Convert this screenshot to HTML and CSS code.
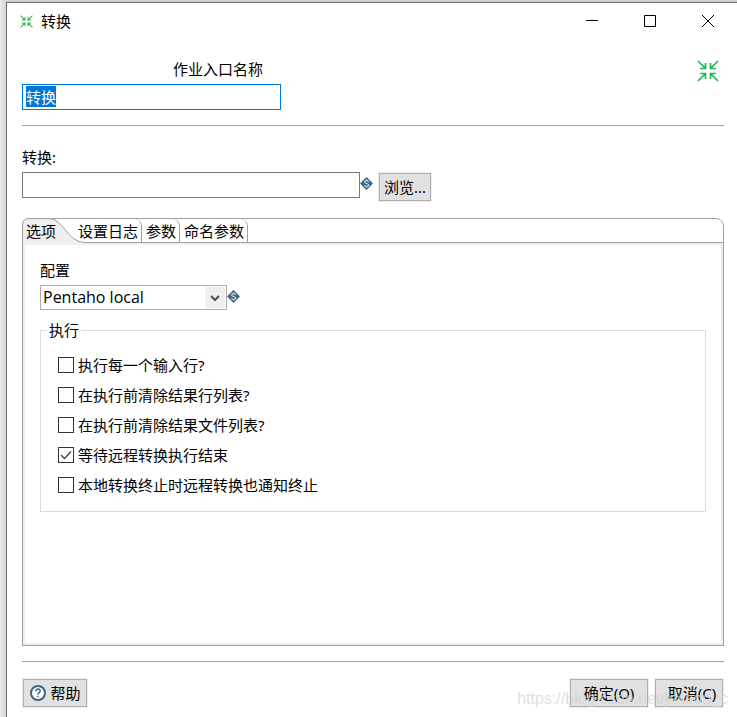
FILE: index.html
```
<!DOCTYPE html>
<html lang="zh-CN">
<head>
<meta charset="utf-8">
<meta name="viewport" content="width=device-width, initial-scale=1">
<title>转换</title>
<link rel="stylesheet" href="styles.css">
</head>
<body>
<svg class="defs" aria-hidden="true">
  <symbol id="shrink" viewBox="0 0 22 22">
    <path d="M1 1l7.500 7.500M3 8.500h5.500V3M21 1l-7.500 7.500M19 8.500h-5.500V3M1 21l7.500-7.500M3 13.500h5.500V19M21 21l-7.500-7.500M19 13.500h-5.500V19" fill="none" stroke="#27b557" stroke-width="1.700"/>
  </symbol>
  <symbol id="variable" viewBox="0 0 13 13">
    <path d="M6.500 0.300L12.700 6.500 6.500 12.700 0.300 6.500z" fill="#3d6480" stroke="#3d6480" stroke-width=".6" stroke-linejoin="round"/>
    <path d="M8.600 4.900C8.300 3.200 4.700 3.200 4.700 5c0 1.800 4 1.200 4 3 0 1.900-3.900 1.800-4.200 0M6.600 2.600v1.200M6.600 9.300v1.200" fill="none" stroke="#d5e0e8" stroke-width="1.200"/>
  </symbol>
</svg>
<div class="window">
  <header class="titlebar">
    <svg class="app-icon"><use href="#shrink"/></svg>
    <h1 class="title">转换</h1>
    <div class="window-controls">
      <button class="control" type="button" aria-label="最小化"><svg class="glyph" viewBox="0 0 14 14"><path d="M1 6.500h12"/></svg></button>
      <button class="control" type="button" aria-label="最大化"><svg class="glyph" viewBox="0 0 14 14"><path d="M1.500 1.500h11v11h-11z"/></svg></button>
      <button class="control" type="button" aria-label="关闭"><svg class="glyph" viewBox="0 0 14 14"><path d="M1 1l12 12M13 1L1 13"/></svg></button>
    </div>
  </header>
  <main class="content">
    <section class="entry">
      <div class="entry-field">
        <label class="entry-label" for="entry-name">作业入口名称</label>
        <input class="text-box" id="entry-name" type="text" value="转换">
      </div>
      <svg class="entry-icon"><use href="#shrink"/></svg>
    </section>
    <section class="source">
      <label class="field-label" for="source">转换:</label>
      <div class="source-row">
        <input class="text-box source-input" id="source" type="text">
        <svg class="variable"><use href="#variable"/></svg>
        <button class="button browse" type="button">浏览...</button>
      </div>
    </section>
    <section class="tabs">
      <div class="tab-list" role="tablist">
        <button class="tab tab-active" type="button" role="tab" aria-selected="true">
          <svg class="tab-shape" viewBox="0 0 62 25" aria-hidden="true">
            <path d="M0 25V7Q1 0 7 0H27C42 1 44 23 62 24V25z" fill="#efefef"/>
            <path d="M.500 25V7Q1 .500 7 .500H27C42 1 44 23 62 24.500" fill="none" stroke="#a0a0a0"/>
          </svg>
          <span class="tab-text">选项</span>
        </button>
        <button class="tab" type="button" role="tab" aria-selected="false">设置日志</button>
        <button class="tab" type="button" role="tab" aria-selected="false">参数</button>
        <button class="tab" type="button" role="tab" aria-selected="false">命名参数</button>
      </div>
      <div class="panel" role="tabpanel">
        <label class="field-label" for="config">配置</label>
        <div class="config-row">
          <div class="select-wrap">
            <select class="select" id="config"><option>Pentaho local</option></select>
            <span class="select-arrow"><svg class="chevron" viewBox="0 0 10 8"><path d="M1 2l4 4 4-4"/></svg></span>
          </div>
          <svg class="variable"><use href="#variable"/></svg>
        </div>
        <fieldset class="group">
          <legend class="legend">执行</legend>
          <label class="check"><input class="box" type="checkbox">执行每一个输入行?</label>
          <label class="check"><input class="box" type="checkbox">在执行前清除结果行列表?</label>
          <label class="check"><input class="box" type="checkbox">在执行前清除结果文件列表?</label>
          <label class="check"><input class="box" type="checkbox" checked>等待远程转换执行结束</label>
          <label class="check"><input class="box" type="checkbox">本地转换终止时远程转换也通知终止</label>
        </fieldset>
      </div>
    </section>
    <footer class="footer">
      <button class="button help" type="button">
        <svg class="help-icon" viewBox="0 0 16 16"><circle cx="8" cy="8" r="7"/><path d="M5.800 6.300C5.800 3.300 10.300 3.500 10.200 6.200 10.100 7.700 8 7.600 8 9.500M8 10.700v1.500"/></svg>
        帮助
      </button>
      <button class="button ok" type="button">确定(O)</button>
      <button class="button cancel" type="button">取消(C)</button>
      <span class="watermark">https://blog.csdn.net/jesson_c</span>
    </footer>
  </main>
</div>
<script src="script.js"></script>
</body>
</html>
```
FILE: styles.css
```
* {
  box-sizing: border-box;
}

body {
  margin: 0;
  padding: 2px 0 0 6px;
  background: linear-gradient(to right, #ededed, #d2d2d2 6px);
  color: #000;
  font: 15px/20px "Noto Sans", "Noto Sans CJK SC", sans-serif;
}

button,
input,
select {
  font: inherit;
  color: inherit;
}

svg {
  flex: none;
}

.defs {
  position: absolute;
  width: 0;
  height: 0;
}

.window {
  display: flex;
  flex-direction: column;
  min-height: calc(100vh - 2px);
  border-top: 1px solid #6e6e6e;
  border-left: 1px solid #6e6e6e;
  background: #fff;
}

.titlebar {
  display: flex;
  align-items: center;
  height: 36px;
  padding-left: 13px;
}

.app-icon {
  width: 13px;
  height: 13px;
}

.title {
  margin: 0 0 0 8px;
  font-size: 15px;
  font-weight: 400;
}

.window-controls {
  display: flex;
  margin-left: auto;
}

.control {
  display: flex;
  align-items: center;
  justify-content: center;
  width: 58px;
  height: 36px;
  padding: 0;
  border: 0;
  background: none;
}

.glyph {
  width: 14px;
  height: 14px;
  fill: none;
  stroke: #000;
}

.content {
  display: flex;
  flex: 1;
  flex-direction: column;
  padding: 0 13px 0 15px;
}

.entry {
  display: flex;
  justify-content: space-between;
  padding: 20px 0 15px;
  border-bottom: 1px solid #a0a0a0;
}

.entry-field {
  display: flex;
  flex-direction: column;
  gap: 5px;
  width: 259px;
}

.entry-label {
  padding-right: 18px;
  text-align: right;
}

.entry-icon {
  width: 22px;
  height: 22px;
  margin: 1px 5px 0 0;
}

.text-box {
  height: 26px;
  padding: 0 3px 2px;
  border: 1px solid #7a7a7a;
  border-radius: 0;
  outline: 0;
  background: #fff;
}

.text-box:focus {
  border-color: #0078d7;
}

.text-box::selection {
  background: #0078d7;
  color: #fff;
}

.source {
  padding: 21px 0 17px;
}

.field-label {
  display: block;
}

.source-row {
  display: flex;
  align-items: flex-start;
  margin-top: 5px;
}

.source-input {
  width: 338px;
}

.variable {
  width: 13px;
  height: 13px;
  margin-top: 5px;
}

.button {
  display: flex;
  align-items: center;
  justify-content: center;
  height: 28px;
  padding: 0;
  border: 1px solid #adadad;
  outline: 1px solid #f0f0f0;
  background: #e1e1e1;
}

.browse {
  width: 52px;
  margin: 1px 0 0 6px;
}

.tabs {
  display: flex;
  flex: 1;
  flex-direction: column;
}

.tab-list {
  display: flex;
  height: 25px;
  border: 1px solid #a0a0a0;
  border-radius: 8px 8px 0 0;
}

.tab {
  height: 23px;
  padding: 0 3px 0 4px;
  border: 0;
  border-right: 1px solid #a0a0a0;
  border-radius: 0 7px 0 0;
  background: none;
}

.tab-active {
  position: relative;
  width: 51px;
  padding: 0 3px;
  border: 0;
  text-align: left;
}

.tab-shape {
  position: absolute;
  top: -1px;
  left: -1px;
  width: 62px;
  height: 25px;
}

.tab-text {
  position: relative;
}

.panel {
  flex: 1;
  padding: 17px 17px 0;
  border: 1px solid #a0a0a0;
  border-top: 0;
  box-shadow: inset 0 0 0 2px #efefef;
}

.config-row {
  display: flex;
  margin-top: 5px;
}

.select-wrap {
  position: relative;
  width: 187px;
}

.select {
  width: 100%;
  height: 25px;
  padding: 0 2px 2px;
  border: 1px solid #adadad;
  border-radius: 0;
  background: #fff;
  font: 16px/20px "Open Sans", "Noto Sans CJK SC", sans-serif;
  appearance: none;
}

.select-arrow {
  position: absolute;
  top: 2px;
  right: 2px;
  display: flex;
  align-items: center;
  justify-content: center;
  width: 20px;
  height: 21px;
  background: #efefef;
  pointer-events: none;
}

.chevron {
  width: 10px;
  height: 8px;
  fill: none;
  stroke: #505050;
  stroke-width: 2;
}

.group {
  margin: 10px 0 0;
  padding: 10px 17px 11px;
  border: 1px solid #dcdcdc;
}

.legend {
  margin-left: -11px;
  padding: 0 2px;
}

.check {
  display: flex;
  align-items: center;
  height: 30px;
}

.box {
  width: 16px;
  height: 16px;
  margin: 0 4px 0 0;
  border: 1px solid #333;
  background: #fff;
  appearance: none;
}

.box:checked {
  background: #fff url("data:image/svg+xml,%3Csvg xmlns='http://www.w3.org/2000/svg' viewBox='0 0 14 14'%3E%3Cpath d='M2 7l3.500 3.500L12 3.500' fill='none' stroke='%23404040' stroke-width='1.300'/%3E%3C/svg%3E");
}

.footer {
  position: relative;
  display: flex;
  margin-top: 15px;
  padding: 17px 1px 10px;
  border-top: 1px solid #a0a0a0;
}

.help {
  gap: 4px;
  width: 64px;
  padding-left: 1px;
}

.help-icon {
  width: 16px;
  height: 16px;
  fill: #fff;
  stroke: #3d6480;
  stroke-width: 2;
}

.help-icon path {
  fill: none;
  stroke-width: 1.500;
}

.ok {
  width: 78px;
  margin-left: auto;
}

.cancel {
  width: 68px;
  padding-left: 6px;
  margin-left: 7px;
}

.watermark {
  position: absolute;
  top: 27px;
  right: -4px;
  color: #d4d4d4c0;
  font: 16px/20px "Liberation Sans", sans-serif;
  pointer-events: none;
}
```
FILE: script.js
```
const entry = document.getElementById("entry-name");
entry.focus();
entry.select();
```
